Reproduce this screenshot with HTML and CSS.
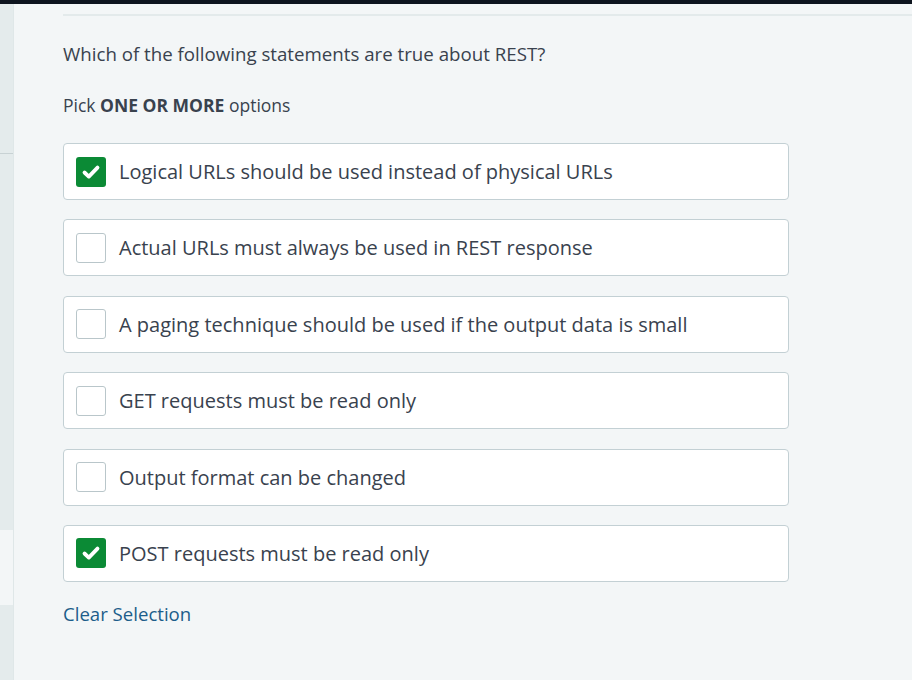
FILE: index.html
```html
<!DOCTYPE html>
<html>
<head>
<meta charset="utf-8">
<link rel="stylesheet" href="styles.css">
</head>
<body>
<div class="topbar"></div>
<div class="page">
  <aside class="side">
    <div class="side-top"></div>
    <div class="side-mid"></div>
    <div class="side-gap"></div>
    <div class="side-bot"></div>
  </aside>
  <main class="content">
    <div class="rule"></div>
    <p class="question">Which of the following statements are true about REST?</p>
    <p class="pick">Pick <strong>ONE OR MORE</strong> options</p>
    <ul class="options">
      <li class="option"><span class="box checked"><svg viewBox="0 0 30 30" width="30" height="30"><path d="M8.5 15.5 L12.8 19.6 L21.5 10.6" fill="none" stroke="#fff" stroke-width="3.8" stroke-linecap="round" stroke-linejoin="round"/></svg></span><span class="label">Logical URLs should be used instead of physical URLs</span></li>
      <li class="option"><span class="box"></span><span class="label">Actual URLs must always be used in REST response</span></li>
      <li class="option"><span class="box"></span><span class="label">A paging technique should be used if the output data is small</span></li>
      <li class="option"><span class="box"></span><span class="label">GET requests must be read only</span></li>
      <li class="option"><span class="box"></span><span class="label">Output format can be changed</span></li>
      <li class="option"><span class="box checked"><svg viewBox="0 0 30 30" width="30" height="30"><path d="M8.5 15.5 L12.8 19.6 L21.5 10.6" fill="none" stroke="#fff" stroke-width="3.8" stroke-linecap="round" stroke-linejoin="round"/></svg></span><span class="label">POST requests must be read only</span></li>
    </ul>
    <a class="clear" href="#">Clear Selection</a>
  </main>
</div>
</body>
</html>
```
FILE: styles.css
```css
html, body {
  margin: 0;
  padding: 0;
  background: #f3f6f7;
  font-family: "Open Sans", "Noto Sans", sans-serif;
  color: #39424e;
  height: 680px;
  overflow: hidden;
}
.topbar {
  height: 4px;
  background: #0d141e;
}
.page {
  display: flex;
  height: 676px;
}
.side {
  width: 13px;
  display: flex;
  flex-direction: column;
  border-right: 1px solid #dfe7e8;
}
.side-top {
  height: 149px;
  background: #e4ebec;
  border-bottom: 1px solid #c8d2d4;
}
.side-mid {
  height: 376px;
  background: #e4ebec;
}
.side-gap {
  height: 75px;
  background: #f3f6f7;
}
.side-bot {
  flex: 1;
  background: #e4ebec;
}
.content {
  flex: 1;
  padding-left: 49px;
}
.rule {
  height: 2px;
  margin-top: 10px;
  background: #e3eaeb;
}
.question {
  margin: 23px 0 0;
  font-size: 18.7px;
  line-height: 30px;
}
.pick {
  margin: 21px 0 0;
  font-size: 17.5px;
  line-height: 30px;
}
.pick strong {
  font-weight: 700;
}
.options {
  list-style: none;
  margin: 23px 0 0;
  padding: 0;
  width: 726px;
  display: flex;
  flex-direction: column;
  gap: 19.4px;
}
.option {
  box-sizing: border-box;
  height: 57px;
  background: #fff;
  border: 1px solid #c3d0d4;
  border-radius: 4px;
  display: flex;
  align-items: center;
  padding-left: 12px;
}
.box {
  box-sizing: border-box;
  width: 30px;
  height: 30px;
  border: 1px solid #b9c6ca;
  border-radius: 3px;
  background: #fff;
  display: flex;
  align-items: center;
  justify-content: center;
  flex-shrink: 0;
  overflow: hidden;
}
.box svg {
  flex-shrink: 0;
}
.box.checked {
  background: #0b8a35;
  border: none;
}
.label {
  margin-left: 13px;
  font-size: 20px;
  color: #39424e;
}
.clear {
  display: inline-block;
  margin-top: 19px;
  font-size: 18.6px;
  color: #1c5d8a;
  text-decoration: none;
}
```
